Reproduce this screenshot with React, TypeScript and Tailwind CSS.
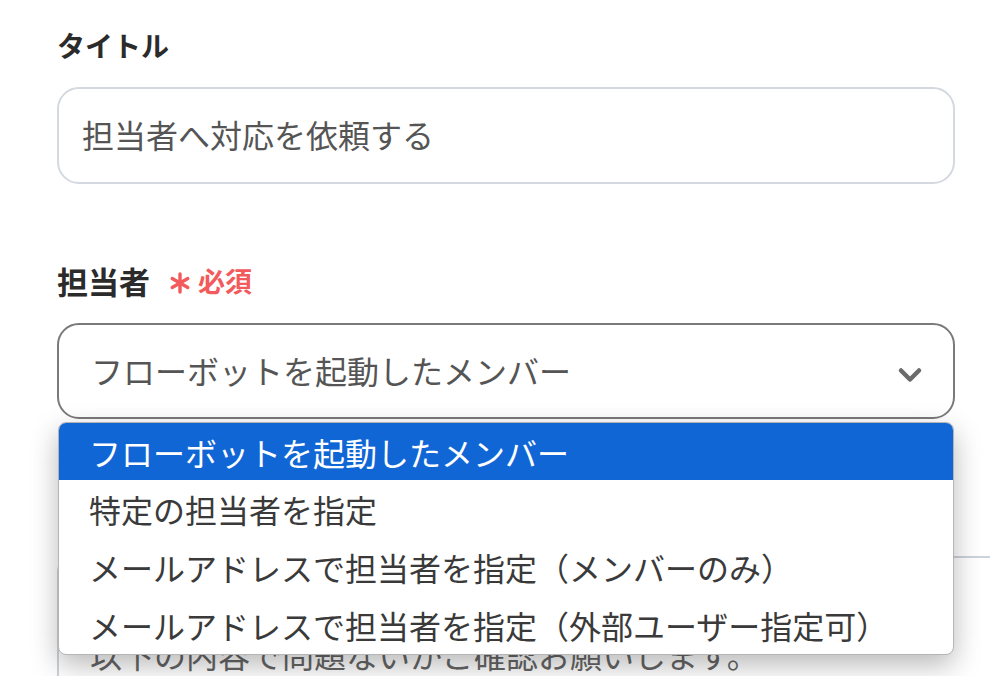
import { ChevronDown } from 'lucide-react'

const options = [
    'フローボットを起動したメンバー',
    '特定の担当者を指定',
    'メールアドレスで担当者を指定（メンバーのみ）',
    'メールアドレスで担当者を指定（外部ユーザー指定可）',
]

function Asterisk() {
    return (
        <svg width="22" height="22" viewBox="0 0 22 22" className="mt-[4px]">
            <g stroke="#f25a5c" strokeWidth="3.4" strokeLinecap="round">
                <line x1="11" y1="2" x2="11" y2="20" />
                <line x1="3.2" y1="6.5" x2="18.8" y2="15.5" />
                <line x1="3.2" y1="15.5" x2="18.8" y2="6.5" />
            </g>
        </svg>
    )
}

function Label({ text, size, required }: { text: string; size: string; required?: boolean }) {
    return (
        <div className="flex items-center h-[40px]">
            <span className={size + ' font-bold text-[#2b2b2b]'}>{text}</span>
            {required && (
                <span className="flex items-center ml-[19px] text-[#f25a5c] font-bold">
                    <Asterisk />
                    <span className="text-[27px] ml-[7px]">必須</span>
                </span>
            )}
        </div>
    )
}

export default function App() {
    return (
        <div
            className="relative w-[990px] h-[676px] overflow-hidden bg-white"
            style={{ fontFamily: '"Noto Sans CJK JP", "Noto Sans", sans-serif' }}
        >
            <div className="flex flex-col pl-[57px] w-[955px]">
                <div className="mt-[25px]">
                    <Label text="タイトル" size="text-[28px]" />
                </div>
                <div className="mt-[22px] flex items-center h-[97px] rounded-[22px] border-2 border-[#d4d9df] pl-[23px]">
                    <span className="text-[32px] text-[#555] -mt-[4px]">担当者へ対応を依頼する</span>
                </div>

                <div className="mt-[77px]">
                    <Label text="担当者" size="text-[31px]" required />
                </div>
                <div className="mt-[22px] flex items-center justify-between h-[96px] rounded-[22px] border-2 border-[#7a7a7a] pl-[32px] pr-[25px]">
                    <span className="text-[32px] text-[#555] -mt-[2px]">フローボットを起動したメンバー</span>
                    <ChevronDown className="text-[#6b6b6b] mt-[8px]" size={36} strokeWidth={3} />
                </div>

                <div className="mt-[137px] w-[960px] h-[200px] border-2 border-[#cdd3da] rounded-[16px] pl-[31px] pt-[72px]">
                    <span className="text-[32px] text-[#666]">以下の内容で問題ないかご確認お願いします。</span>
                </div>
            </div>

            <div className="absolute left-[58px] top-[422px] w-[896px] flex flex-col bg-white rounded-[8px] border border-[#b5b5b5] overflow-hidden shadow-[0_10px_28px_rgba(0,0,0,0.28)]">
                {options.map((option, i) => (
                    <div
                        key={option}
                        className={
                            i === 0
                                ? 'flex items-center h-[57px] pl-[30px] bg-[#1166d6] text-white text-[32px]'
                                : 'flex items-center h-[58px] pl-[30px] text-[#3a3a3a] text-[32px]'
                        }
                    >
                        {option}
                    </div>
                ))}
            </div>
        </div>
    )
}
